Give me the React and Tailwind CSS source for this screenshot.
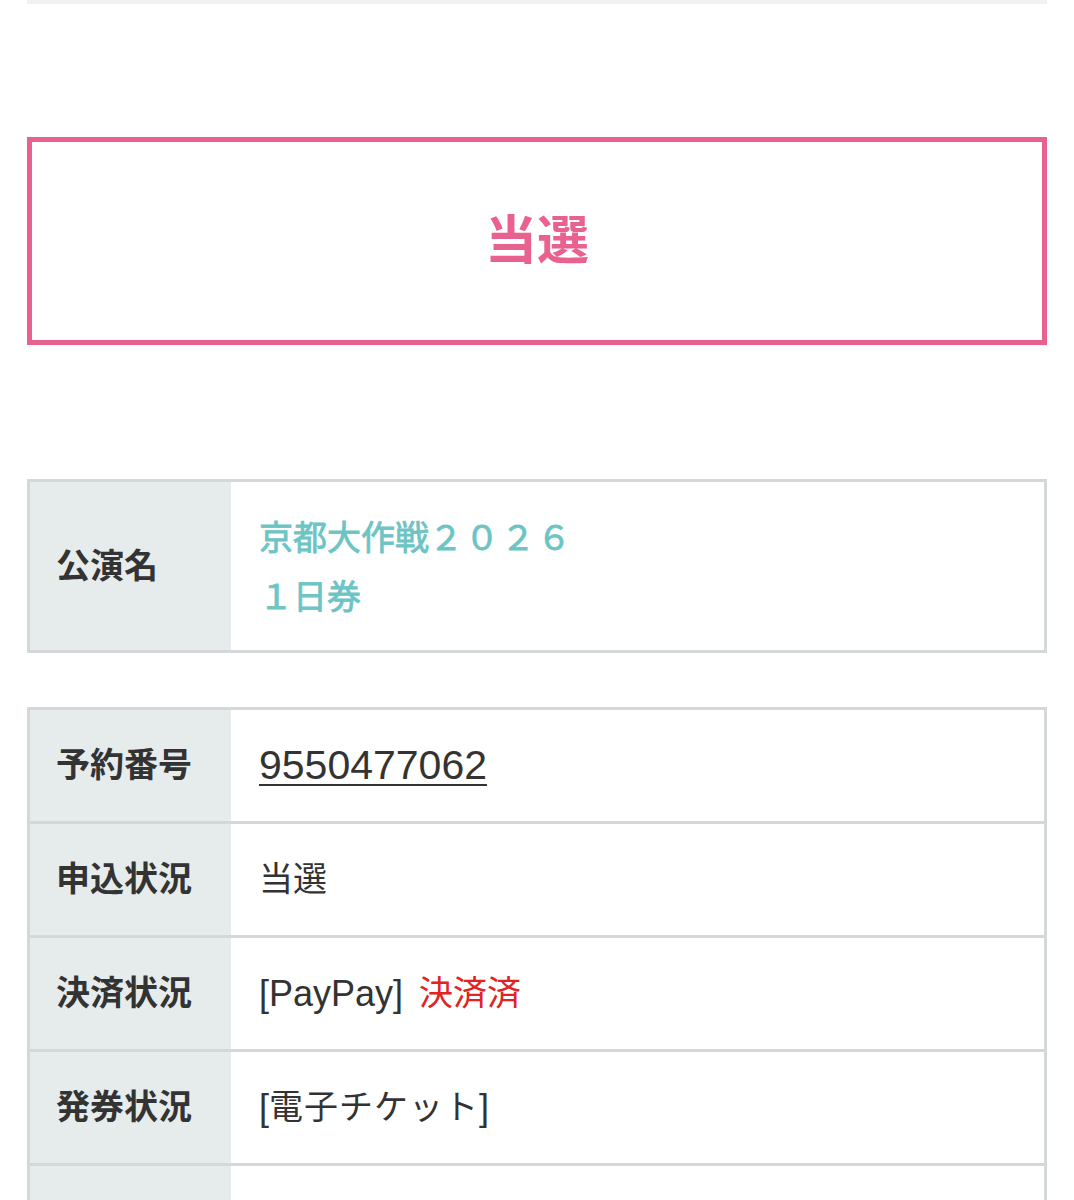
import React from "react";

const jp = { fontFamily: '"Liberation Sans", "Noto Sans CJK JP", sans-serif' };

function Row({ label, children, last }) {
    return (
        <div className={"flex h-[114px] " + (last ? "" : "border-b-[3px] border-[#d4d8d9]")}>
            <div className="w-[201px] shrink-0 bg-[#e6ebeb] flex items-center pl-[26px] text-[34px] font-bold text-[#333]">
                {label}
            </div>
            <div className="flex-1 flex items-center pl-[28px] text-[34px] text-[#333]">
                {children}
            </div>
        </div>
    );
}

export default function App() {
    return (
        <div className="min-h-screen bg-white px-[27px]" style={jp}>
            {/* bottom edge of the previous panel */}
            <div className="h-[4px] bg-[#f1f1f1]"></div>

            {/* Result banner */}
            <div className="mt-[133px] h-[208px] border-[5px] border-[#e9628f] flex items-center justify-center">
                <span className="text-[52px] font-bold text-[#e9628f] leading-none">当選</span>
            </div>

            {/* Event name */}
            <div className="mt-[134px] border-[3px] border-[#d4d8d9] flex h-[174px]">
                <div className="w-[201px] shrink-0 bg-[#e6ebeb] flex items-center pl-[26px] text-[34px] font-bold text-[#333]">
                    公演名
                </div>
                <div className="flex-1 flex flex-col justify-center pl-[28px] pt-[4px] text-[34px] leading-[59px] text-[#6cc4c4] [-webkit-text-stroke:0.8px_#6cc4c4]">
                    <div>京都大作戦<span className="tracking-[2px]">２０２６</span></div>
                    <div>１日券</div>
                </div>
            </div>

            {/* Reservation details */}
            <div className="mt-[54px] border-[3px] border-b-0 border-[#d4d8d9]">
                <Row label="予約番号">
                    <span className="text-[41px] underline decoration-2 underline-offset-[5px]">9550477062</span>
                </Row>
                <Row label="申込状況">当選</Row>
                <Row label="決済状況">
                    <span className="text-[36px] font-light">[PayPay]</span>
                    <span className="ml-[16px] text-[#e02424]">決済済</span>
                </Row>
                <Row label="発券状況">
                    <span className="text-[36px]">[</span>
                    <span className="tracking-[1px]">電子チケット</span>
                    <span className="text-[36px]">]</span>
                </Row>
                <Row label="" last></Row>
            </div>
        </div>
    );
}
